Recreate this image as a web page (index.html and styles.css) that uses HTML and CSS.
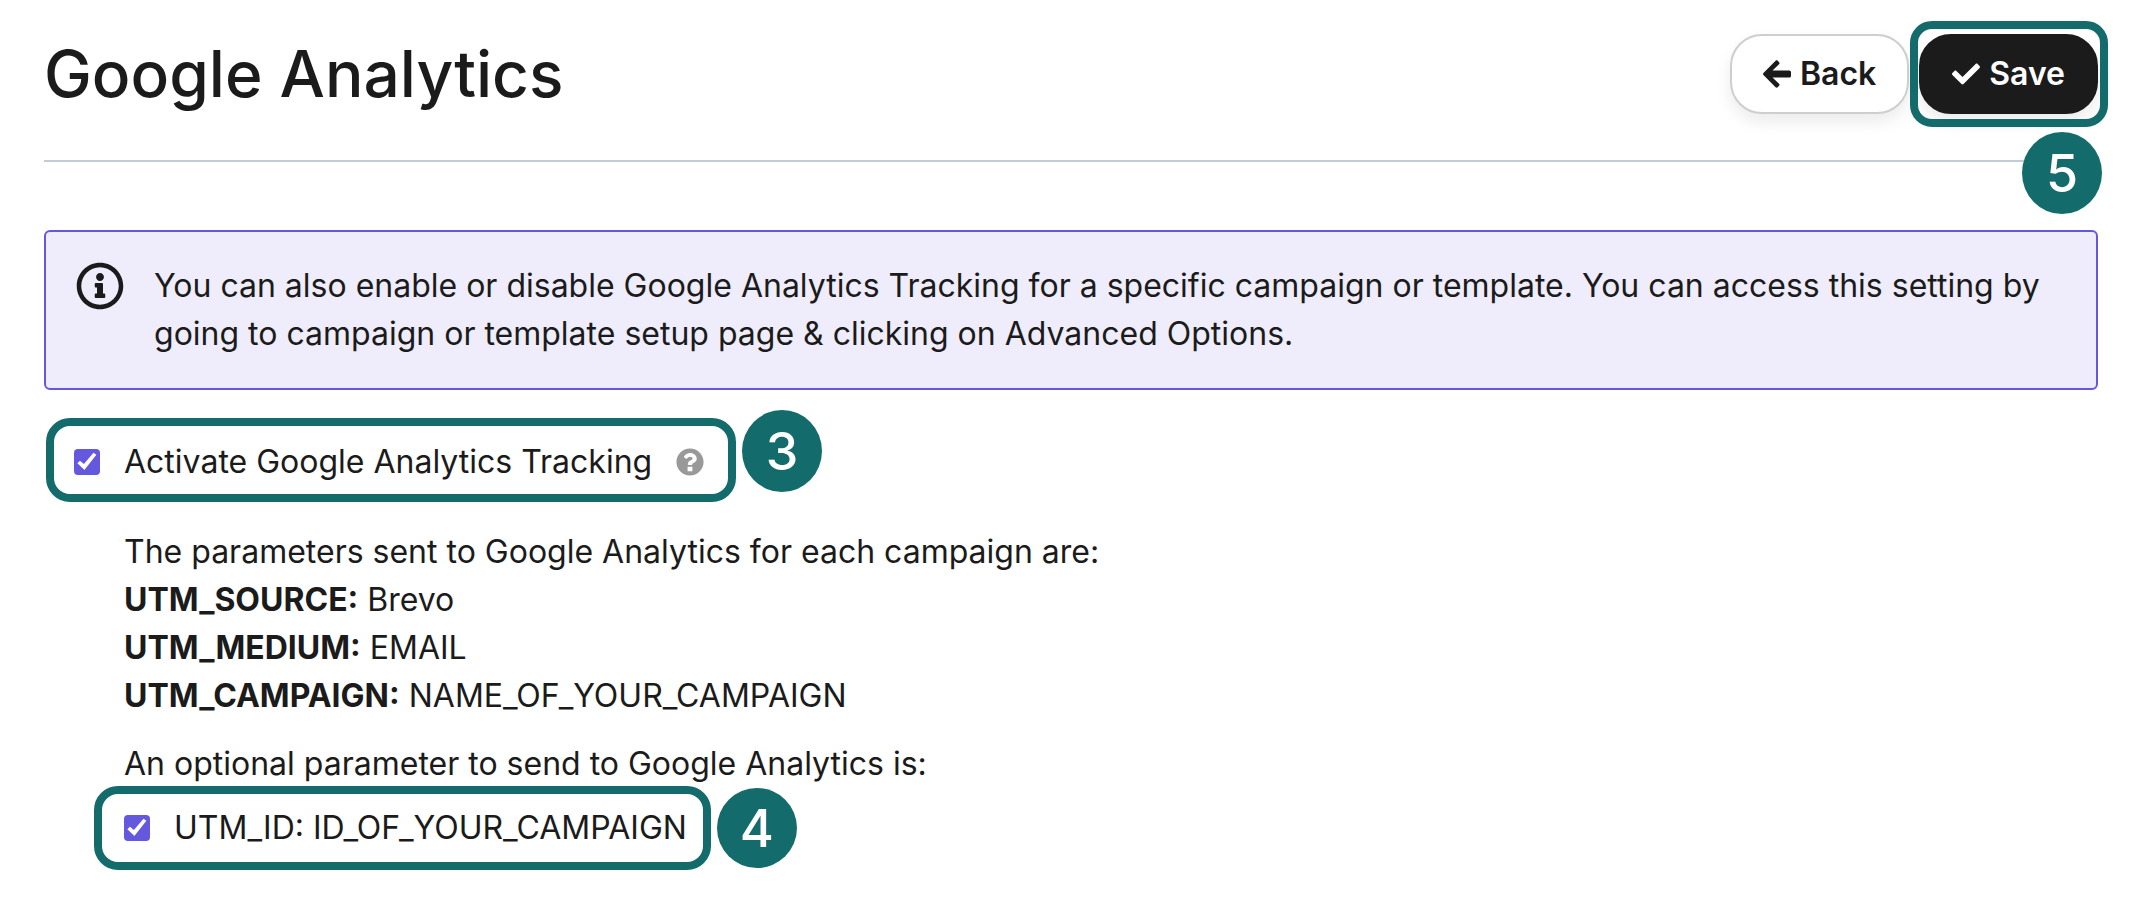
FILE: index.html
```html
<!DOCTYPE html>
<html lang="en">
<head>
<meta charset="utf-8">
<title>Google Analytics</title>
<link rel="stylesheet" href="styles.css">
</head>
<body>
<main class="page">
  <header class="header">
    <h1 class="title">Google Analytics</h1>
    <div class="actions">
      <button class="button" type="button">
        <svg class="button-icon" viewBox="0 0 448 512" aria-hidden="true"><path d="M257.5 445.1l-22.2 22.2c-9.4 9.4-24.6 9.4-33.9 0L7 273c-9.4-9.4-9.4-24.6 0-33.9L201.4 44.7c9.4-9.4 24.6-9.4 33.9 0l22.2 22.2c9.5 9.5 9.3 25-.4 34.3L152 200H420c15 0 28 12 28 26v60c0 14-13 26-28 26H152l105.100 98.800c9.800 9.300 10 24.800.4 34.300z"/></svg>
        Back
      </button>
      <div class="save">
        <button class="button button-dark" type="button">
          <svg class="button-icon" viewBox="0 0 512 512" aria-hidden="true"><path d="M173.898 439.404l-166.4-166.4c-9.997-9.997-9.997-26.206 0-36.204l36.203-36.204c9.997-9.998 26.207-9.998 36.204 0L192 312.69 432.095 72.596c9.997-9.997 26.207-9.997 36.204 0l36.203 36.204c9.997 9.997 9.997 26.206 0 36.204l-294.4 294.401c-9.998 9.997-26.207 9.997-36.204-.001z"/></svg>
          Save
        </button>
        <span class="badge badge-tall save-badge">5</span>
      </div>
    </div>
  </header>

  <section class="notice">
    <svg class="notice-icon" viewBox="0 0 512 512" aria-hidden="true"><path d="M256 8C119.043 8 8 119.083 8 256c0 136.997 111.043 248 248 248s248-111.003 248-248C504 119.083 392.957 8 256 8zm0 448c-110.532 0-200-89.431-200-200 0-110.495 89.472-200 200-200 110.491 0 200 89.471 200 200 0 110.53-89.431 200-200 200zm0-338c23.196 0 42 18.804 42 42s-18.804 42-42 42-42-18.804-42-42 18.804-42 42-42zm56 254c0 6.627-5.373 12-12 12h-88c-6.627 0-12-5.373-12-12v-24c0-6.627 5.373-12 12-12h12v-64h-12c-6.627 0-12-5.373-12-12v-24c0-6.627 5.373-12 12-12h64c6.627 0 12 5.373 12 12v100h12c6.627 0 12 5.373 12 12v24z"/></svg>
    <p class="notice-text">You can also enable or disable Google Analytics Tracking for a specific campaign or template. You can access this setting by going to campaign or template setup page &amp; clicking on Advanced Options.</p>
  </section>

  <div class="step step-tracking">
    <div class="ring">
      <input class="checkbox" type="checkbox" id="tracking" checked>
      <label for="tracking">Activate Google Analytics Tracking</label>
      <svg class="help" viewBox="0 0 512 512" role="img" aria-label="Help"><path fill-rule="evenodd" d="M504 256c0 136.997-111.043 248-248 248S8 392.997 8 256C8 119.083 119.043 8 256 8s248 111.083 248 248zM262.655 90c-54.497 0-89.255 22.957-116.549 63.758-3.536 5.286-2.353 12.415 2.715 16.258l34.699 26.31c5.205 3.947 12.621 3.008 16.665-2.122 17.864-22.658 30.113-35.797 57.303-35.797 20.429 0 45.698 13.148 45.698 32.958 0 14.976-12.363 22.667-32.534 33.976C247.128 238.528 216 254.941 216 296v4c0 6.627 5.373 12 12 12h56c6.627 0 12-5.373 12-12v-1.333c0-28.462 83.186-29.647 83.186-106.667 0-58.002-60.165-102-116.531-102zM212 342v84h88v-84z"/></svg>
    </div>
    <span class="badge badge-tall">3</span>
  </div>

  <section class="details">
    <p>The parameters sent to Google Analytics for each campaign are:</p>
    <p><strong>UTM_SOURCE:</strong> Brevo</p>
    <p><strong>UTM_MEDIUM:</strong> EMAIL</p>
    <p><strong>UTM_CAMPAIGN:</strong> NAME_OF_YOUR_CAMPAIGN</p>
    <p class="optional">An optional parameter to send to Google Analytics is:</p>
  </section>

  <div class="step step-id">
    <div class="ring">
      <input class="checkbox" type="checkbox" id="utm-id" checked>
      <label for="utm-id">UTM_ID: ID_OF_YOUR_CAMPAIGN</label>
    </div>
    <span class="badge">4</span>
  </div>
</main>
</body>
</html>
```
FILE: styles.css
```css
* {
  box-sizing: border-box;
}

body {
  margin: 0;
  background: #fff;
  color: #1b1b1b;
  font: 400 32px/48px Inter, "Liberation Sans", sans-serif;
}

p,
h1 {
  margin: 0;
}

.page {
  padding: 34px 32px 32px 44px;
}

.header {
  display: flex;
  align-items: center;
  justify-content: space-between;
  padding-bottom: 46px;
  border-bottom: 2px solid #c0ccda;
}

.title {
  font-size: 64px;
  font-weight: 500;
  line-height: 80px;
}

.actions {
  display: flex;
  gap: 10px;
}

.button {
  display: flex;
  align-items: center;
  gap: 9px;
  height: 80px;
  padding: 0 31px;
  border: 2px solid #cecece;
  border-radius: 32px;
  background: #fff;
  color: #1b1b1b;
  font: inherit;
  font-weight: 600;
  box-shadow: 0 8px 16px rgba(0, 0, 0, 0.08);
}

.button-dark {
  border-color: #1b1b1b;
  background: #1b1b1b;
  color: #fff;
}

.button-icon {
  width: 28px;
  height: 32px;
  fill: currentColor;
}

.save {
  position: relative;
}

.save::after {
  content: "";
  position: absolute;
  inset: -13px -10px -13px -9px;
  border: 8px solid #136c6b;
  border-radius: 22px;
  pointer-events: none;
}

.badge {
  display: flex;
  align-items: center;
  justify-content: center;
  width: 80px;
  height: 80px;
  padding-top: 2px;
  border-radius: 50%;
  background: #136c6b;
  color: #fff;
  font-size: 52px;
  font-weight: 500;
}

.badge-tall {
  height: 82px;
}

.save-badge {
  position: absolute;
  top: 98px;
  right: -4px;
}

.notice {
  display: flex;
  gap: 30px;
  margin-top: 68px;
  padding: 30px;
  border: 2px solid #6358de;
  border-radius: 6px;
  background: #efedfc;
}

.notice-icon {
  flex: none;
  width: 48px;
  height: 48px;
  fill: #1b1b1b;
}

.step {
  display: flex;
  gap: 6px;
}

.step-tracking {
  margin: 20px 0 26px 2px;
}

.step-tracking .ring {
  margin-top: 8px;
  padding: 4px 24px 0 20px;
}

.step-id {
  align-items: center;
  margin: -2px 0 0 50px;
}

.step-id .ring {
  padding: 0 16px 0 22px;
}

.ring {
  display: flex;
  align-items: center;
  gap: 24px;
  height: 84px;
  border: 8px solid #136c6b;
  border-radius: 24px;
}

.checkbox {
  appearance: none;
  width: 26px;
  height: 26px;
  margin: 0;
  border-radius: 4px;
  background: #6358de;
}

.checkbox::before {
  content: "";
  display: block;
  width: 26px;
  height: 26px;
  background: #fff;
  clip-path: polygon(13% 55%, 23% 45%, 38% 58%, 75% 14%, 86% 22%, 40% 81%);
}

.checkbox:not(:checked)::before {
  display: none;
}

.help {
  width: 28px;
  height: 28px;
  fill: #999;
}

.details {
  padding-left: 80px;
}

.optional {
  margin-top: 20px;
}
```
